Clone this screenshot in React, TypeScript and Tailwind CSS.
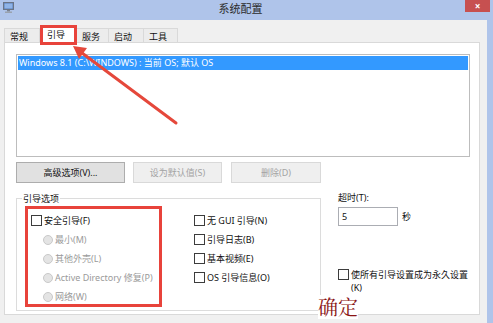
import React from "react";

const TABS = ["常规", "引导", "服务", "启动", "工具"];
const TAB_WIDTHS = ["w-[36px]", "w-[37px]", "w-[33px]", "w-[36px]", "w-[35px]"];

const Check: React.FC = () => (
  <span className="inline-block w-[11px] h-[11px] border border-[#3c3c3c] bg-white shrink-0" />
);

const Radio: React.FC = () => (
  <span className="inline-block w-[10px] h-[10px] rounded-full border border-[#c9c9c9] bg-[#e4e4e4] shrink-0" />
);

const CheckRow: React.FC<{ label: string }> = ({ label }) => (
  <div className="h-[19px] flex items-center gap-[2px]">
    <Check />
    <span>{label}</span>
  </div>
);

const RadioRow: React.FC<{ label: string }> = ({ label }) => (
  <div className="h-[19px] flex items-center gap-[2px] pl-[12px] text-[#9a9a9a]">
    <Radio />
    <span>{label}</span>
  </div>
);

const App: React.FC = () => {
  return (
    <div
      className="relative w-[493px] h-[323px] overflow-hidden text-[9px] leading-[13px] text-[#111]"
      style={{ fontFamily: '"Noto Sans", "Noto Sans CJK SC", sans-serif' }}
    >
      {/* title bar */}
      <div className="h-[20px] bg-[#afc4ea] flex items-start">
        <div className="w-[16px] pl-[3px] pt-[2px]">
          <svg width="11" height="11" viewBox="0 0 11 11">
            <rect x="0.5" y="0.5" width="10" height="7" fill="#5a7fb8" stroke="#6a7486" />
            <rect x="1.5" y="1.5" width="8" height="5" fill="#8fb4e8" />
            <rect x="4" y="8" width="3" height="1.5" fill="#7a8290" />
            <rect x="2" y="9.5" width="7" height="1.5" fill="#9aa2ae" />
          </svg>
        </div>
        <div className="flex-1 text-center text-[11px] leading-[18px] text-[#2b2b2b]">
          系统配置
        </div>
        <div className="w-[25px] h-[12px] bg-[#c75050] mr-[3px] flex items-center justify-center text-white text-[10px] leading-none font-bold">
          ×
        </div>
      </div>

      <div className="flex h-[303px]">
        <div className="w-[487px] bg-[#f0f0f0] pl-[4px] pt-[5px] flex flex-col">
          {/* tabs */}
          <div className="h-[18px] flex items-end">
            {TABS.map((t, i) =>
              i === 1 ? (
                <div
                  key={t}
                  className={`relative ${TAB_WIDTHS[i]} h-[18px] bg-white border border-b-0 border-[#d9d9d9] pl-[6px] pt-[2px] z-10`}
                >
                  {t}
                  <span className="absolute -left-[1px] -top-[1px] w-[37px] h-[20px] border-[3px] border-[#e8433b]" />
                </div>
              ) : (
                <div
                  key={t}
                  className={`${TAB_WIDTHS[i]} h-[15px] bg-[#ececec] border border-b-0 border-[#d9d9d9] pl-[5px] pt-[1px] -ml-px first:ml-0`}
                >
                  {t}
                </div>
              )
            )}
          </div>

          {/* tab panel */}
          <div className="w-[476px] h-[273px] bg-white border border-[#d9d9d9] -mt-px pl-[11px] pt-[11px] flex flex-col">
            <div className="w-[454px] h-[103px] border border-[#bdbdbd] p-px">
              <div className="h-[14px] bg-[#3399ff] text-white pl-px leading-[14px]">
                Windows 8.1 (C:\WINDOWS) : 当前 OS; 默认 OS
              </div>
            </div>

            <div className="flex mt-[5px] h-[21px]">
              <div className="w-[109px] bg-[#e1e1e1] border border-[#adadad] flex items-center justify-center">
                高级选项(V)...
              </div>
              <div className="w-[89px] ml-[8px] bg-[#efefef] border border-[#d9d9d9] flex items-center justify-center text-[#a3a3a3]">
                设为默认值(S)
              </div>
              <div className="w-[90px] ml-[9px] bg-[#efefef] border border-[#d9d9d9] flex items-center justify-center text-[#a3a3a3]">
                删除(D)
              </div>
            </div>

            <div className="flex mt-[8px]">
              {/* group box */}
              <div className="relative w-[305px] h-[113px] mt-[7px] border border-[#dcdcdc] flex items-start">
                <span className="absolute left-[5px] -top-[7px] bg-white px-px">引导选项</span>
                <div className="w-[137px] h-[101px] ml-[8px] mt-[7px] border-[3px] border-[#e8433b] pt-[2px] pl-[3px]">
                  <CheckRow label="安全引导(F)" />
                  <RadioRow label="最小(M)" />
                  <RadioRow label="其他外壳(L)" />
                  <RadioRow label="Active Directory 修复(P)" />
                  <RadioRow label="网络(W)" />
                </div>
                <div className="ml-[32px] mt-[12px]">
                  <CheckRow label="无 GUI 引导(N)" />
                  <CheckRow label="引导日志(B)" />
                  <CheckRow label="基本视频(E)" />
                  <CheckRow label="OS 引导信息(O)" />
                </div>
              </div>

              {/* right column */}
              <div className="ml-[17px] flex flex-col">
                <div>超时(T):</div>
                <div className="flex items-center mt-[3px]">
                  <div className="w-[60px] h-[19px] border border-[#abadb3] pl-[3px] leading-[17px]">5</div>
                  <span className="ml-[4px]">秒</span>
                </div>
                <div className="flex items-start mt-[42px] gap-[2px]">
                  <span className="mt-px">
                    <Check />
                  </span>
                  <span className="w-[120px]">使所有引导设置成为永久设置(K)</span>
                </div>
              </div>
            </div>
          </div>
        </div>
        <div className="w-[6px] bg-[#afc4ea]" />
      </div>

      {/* annotation */}
      <svg className="absolute left-0 top-0 pointer-events-none" width="493" height="323">
        <line x1="176" y1="123" x2="82" y2="53" stroke="#e5483b" strokeWidth="3" strokeLinecap="round" />
        <polygon points="73,46 87,48 79,59" fill="#e5483b" />
      </svg>
      <div
        className="absolute left-[318px] top-[295px] text-[20px] leading-[24px] text-[#8a1414] bg-white"
        style={{ fontFamily: '"Noto Serif CJK SC", "Noto Sans CJK SC", serif' }}
      >
        确定
      </div>
    </div>
  );
};

export default App;
